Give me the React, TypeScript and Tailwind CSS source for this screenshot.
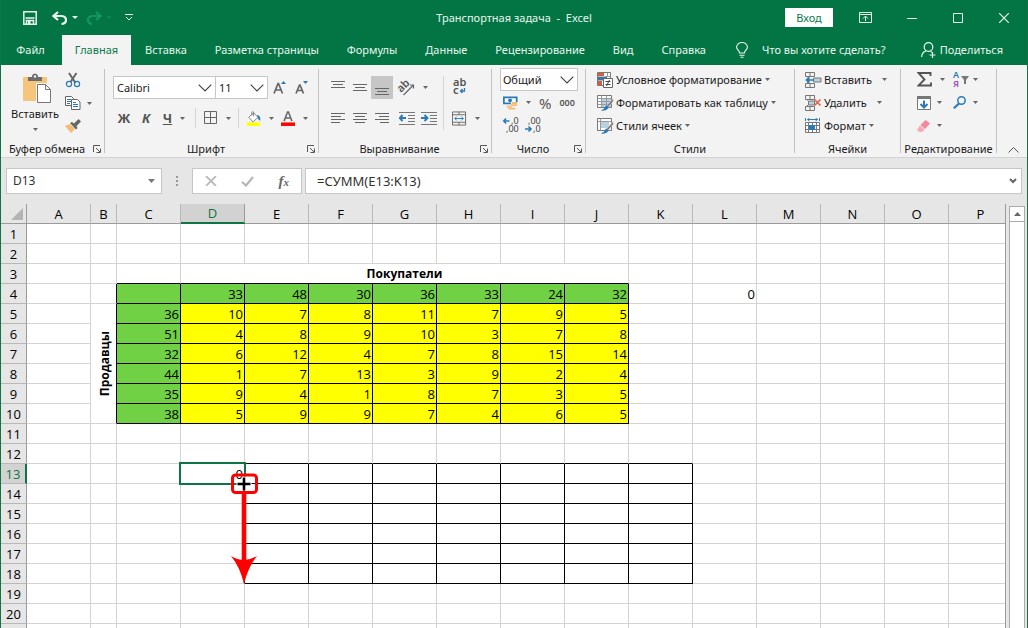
import type { ReactNode } from "react";

const columns = ["A", "B", "C", "D", "E", "F", "G", "H", "I", "J", "K", "L", "M", "N", "O", "P"];

const lastLabelledRow = 20;

const values: Record<number, Record<string, number>> = {
  4: { D: 33, E: 48, F: 30, G: 36, H: 33, I: 24, J: 32, L: 0 },
  5: { C: 36, D: 10, E: 7, F: 8, G: 11, H: 7, I: 9, J: 5 },
  6: { C: 51, D: 4, E: 8, F: 9, G: 10, H: 3, I: 7, J: 8 },
  7: { C: 32, D: 6, E: 12, F: 4, G: 7, H: 8, I: 15, J: 14 },
  8: { C: 44, D: 1, E: 7, F: 13, G: 3, H: 9, I: 2, J: 4 },
  9: { C: 35, D: 9, E: 4, F: 1, G: 8, H: 7, I: 3, J: 5 },
  10: { C: 38, D: 5, E: 9, F: 9, G: 7, H: 4, I: 6, J: 5 },
};

const within = (v: string | number, a: string | number, b: string | number) => v >= a && v <= b;

function cellClass(col: string, row: number) {
  const blackRight =
    (within(row, 4, 10) && within(col, "B", "J")) || (within(row, 13, 18) && within(col, "D", "K"));
  const blackBottom =
    (within(row, 3, 10) && within(col, "C", "J")) || (within(row, 12, 18) && within(col, "E", "K"));
  let fill = "";
  if (within(row, 4, 10) && within(col, "C", "J")) {
    fill = row === 4 || col === "C" ? "bg-[#6fd143]" : "bg-[#ffff00]";
  }
  return [
    "h-5 border-r border-b pr-px pl-0.5 py-0 text-right leading-[18px]",
    blackRight ? "border-r-black" : "border-r-[#d4d4d4]",
    blackBottom ? "border-b-black" : "border-b-[#d4d4d4]",
    fill,
    col === "D" && row === 13 ? "relative" : "",
  ].join(" ");
}

function Caret() {
  return (
    <svg width="5" height="3" viewBox="0 0 5 3" className="shrink-0" fill="#666">
      <path d="M0 0h5L2.5 3z" />
    </svg>
  );
}

function Chevron() {
  return (
    <svg width="14" height="8" viewBox="0 0 14 8" fill="none" stroke="#444" strokeWidth="1.2">
      <path d="M.7.7 7 7 13.3.7" />
    </svg>
  );
}

function Launcher() {
  return (
    <svg width="8" height="8" viewBox="0 0 8 8" fill="none" stroke="#555">
      <path d="M.5 7V.5H7M3 3l4 4M7.5 3.500v4h-4" />
    </svg>
  );
}

function Group({ title, width, launcher, children }: { title: string; width: string; launcher?: boolean; children: ReactNode }) {
  return (
    <section className={`flex shrink-0 ${width}`}>
      <div className="flex min-w-0 flex-1 flex-col">
        <div className="h-[73px]">{children}</div>
        <div className="flex h-4 items-center whitespace-nowrap">
          <h2 className="flex-1 text-center">{title}</h2>
          {launcher && (
            <button aria-label={`${title}: параметры`} className="mr-[3px]">
              <Launcher />
            </button>
          )}
        </div>
      </div>
      <div className="mt-px h-[84px] w-px bg-[#c3c3c3]" />
    </section>
  );
}

function IconButton({ label, width, caret, children }: { label: string; width: string; caret?: boolean; children: ReactNode }) {
  return (
    <button aria-label={label} className={`flex h-[22px] shrink-0 items-center justify-center ${width}`}>
      {children}
      {caret && (
        <span className="ml-2">
          <Caret />
        </span>
      )}
    </button>
  );
}

function Lines({ d }: { d: string }) {
  return (
    <svg width="14" height="14" viewBox="0 0 14 14" stroke="#666" fill="none">
      <path d={d} />
    </svg>
  );
}

function PasteIcon() {
  return (
    <svg width="28" height="32" viewBox="0 0 28 32">
      <path fill="#f4c57a" d="M0 4h24v24H0z" />
      <path fill="#6d6d6d" d="M5 4h4V2.500Q12-1.500 15 2.500V4h4v4H5z" />
      <circle cx="12" cy="3.500" r="1.200" fill="#f3f3f3" />
      <path fill="#fff" stroke="#f3f3f3" strokeWidth="3" d="M14.500 11.500h8l5 5v13h-13z" />
      <path fill="#fff" stroke="#777" d="M14.500 11.500h8l5 5v13h-13zM22.500 11.500v5h5" />
    </svg>
  );
}

function CutIcon() {
  return (
    <svg width="16" height="16" viewBox="0 0 16 16" fill="none">
      <path d="M4 1l6.500 10M11.500 1L5.500 10" stroke="#666" strokeWidth="2" />
      <circle cx="4" cy="12" r="2.600" stroke="#2a7ab5" strokeWidth="1.200" />
      <circle cx="12" cy="12" r="2.600" stroke="#2a7ab5" strokeWidth="1.200" />
    </svg>
  );
}

function CopyIcon() {
  return (
    <svg width="16" height="14" viewBox="0 0 16 14" fill="#fff" stroke="#666">
      <path d="M.5.5h6l2 2v7h-8z" />
      <path d="M2 3.500h4M2 5.500h4M2 7.500h3" stroke="#2a7ab5" />
      <path d="M6.500 3.500h6l2.500 2.500v7.500H6.500z" />
      <path d="M8 6.500h3M8 8.500h5M8 10.500h5" stroke="#2a7ab5" />
    </svg>
  );
}

function BrushIcon() {
  return (
    <svg width="16" height="14" viewBox="0 0 16 14">
      <path fill="#f4bd73" d="M0 7l5-2 5 5-4 4z" />
      <path fill="#666" d="M5 4l2-1 2 1.500L13.500 0 16 2.500 11.500 7l1 2-1.500 1.500z" />
    </svg>
  );
}

function BordersIcon() {
  return (
    <svg width="14" height="14" viewBox="0 0 14 14" fill="none" stroke="#666">
      <path d="M.5.5h12v12H.5zM6.500.5v12M.5 6.500h12" />
    </svg>
  );
}

function FillIcon() {
  return (
    <svg width="16" height="17" viewBox="0 0 16 17" fill="none">
      <path d="M2 7l5.500-5 5 5-5.500 5.500z" fill="#fff" stroke="#777" />
      <path d="M5.500 5V1.500Q6.500-.5 7.500 1.500V6" stroke="#777" />
      <path d="M11.500 4.500Q16 5 15 11l-2-1.500z" fill="#2a7ab5" />
      <path d="M0 13h15v4H0z" fill="#ff0" />
    </svg>
  );
}

function FontColorIcon() {
  return (
    <svg width="16" height="17" viewBox="0 0 16 17" fill="none">
      <path d="M3.500 11.500L7.500 1h1l4 10.500M5 8h6" stroke="#666" strokeWidth="1.700" />
      <path d="M0 13h16v4H0z" fill="#f00" />
    </svg>
  );
}

function GrowFont({ down }: { down?: boolean }) {
  return (
    <svg width="14" height="16" viewBox="0 0 14 16" fill="none">
      <path d={down ? "M1 13.500L4.500 5h.5l3.500 8.500M2.500 10.500h5" : "M1 13.500L5 3.500h.5l4 10M2.500 10h6"} stroke="#666" strokeWidth="1.700" />
      <path d={down ? "M8 1h5l-2.500 3z" : "M8 4h5L10.500 1z"} fill="#2a7ab5" />
    </svg>
  );
}

function OrientationIcon() {
  return (
    <svg width="17" height="16" viewBox="0 0 17 16" className="overflow-visible">
      <g transform="rotate(-45 8 8)">
        <text x="1" y="8" fontSize="11" fontWeight="600" fill="#555">ab</text>
      </g>
      <path d="M5.500 15L15.500 5M12 5h3.500v3.500" stroke="#666" fill="none" strokeWidth="1.200" />
    </svg>
  );
}

function WrapIcon() {
  return (
    <svg width="14" height="18" viewBox="0 0 14 18" className="overflow-visible">
      <text x="0" y="8" fontSize="11" fontWeight="600" fill="#555">ab</text>
      <text x="0" y="16" fontSize="11" fontWeight="600" fill="#555">c</text>
      <path d="M11.500 10v3H7.500M9.500 11l-2 2 2 2" fill="none" stroke="#2a7ab5" strokeWidth="1.300" />
    </svg>
  );
}

function IndentIcon({ right }: { right?: boolean }) {
  return (
    <svg width="16" height="14" viewBox="0 0 16 14" fill="none">
      <path d="M0 1.500h16M9 4.500h7M9 7.500h7M9 10.500h7M0 13.500h16" stroke="#777" />
      <path d={right ? "M0 7h6M3.500 4L6.500 7l-3 3" : "M7 7H1M3.500 4L.8 7l2.700 3"} stroke="#2a7ab5" strokeWidth="1.900" />
    </svg>
  );
}

function MergeIcon() {
  return (
    <svg width="16" height="15" viewBox="0 0 16 15" fill="none">
      <path d="M.5.5h14v14H.5zM.5 3.500h14M.5 11.500h14M7.500.5v3M7.500 11.500v3" stroke="#666" />
      <path d="M3 7.500h9M5 5.500l-2 2 2 2M10 5.500l2 2-2 2" stroke="#2a7ab5" />
    </svg>
  );
}

function CurrencyIcon() {
  return (
    <svg width="17" height="16" viewBox="0 0 17 16" fill="none">
      <path d="M1 1.500h14.500v7H1z" fill="#fff" stroke="#2a7ab5" strokeWidth="2" />
      <circle cx="8" cy="5" r="2.200" fill="#2a7ab5" />
      <path d="M9 7h8v8H4v-4.500h5z" fill="#f3f3f3" />
      <path d="M10 7h6v2h-6zM9 9.500h7v2H9zM4 11h6v2H4zM6 13.500h8v2H6z" fill="#f4bd73" />
    </svg>
  );
}

function DecimalIcon({ less }: { less?: boolean }) {
  return (
    <svg width="16" height="17" viewBox="0 0 16 17" fontSize="9" fill="#444" className="overflow-visible">
      <text x={less ? 3 : 8} y="7">{less ? ",00" : ",0"}</text>
      <text x={less ? 8 : 3} y="15">{less ? ",0" : ",00"}</text>
      <path
        d={less ? "M0 12h6M3.500 9.500L6 12l-2.500 2.500" : "M6.500 4H1M3 1.500L.8 4 3 6.500"}
        fill="none"
        stroke="#2a7ab5"
        strokeWidth="1.600"
      />
    </svg>
  );
}

function ConditionalIcon() {
  return (
    <svg width="16" height="16" viewBox="0 0 16 16" fill="none">
      <path d="M.5.5h13v13H.5z" fill="#fff" stroke="#777" />
      <path d="M1 1h6v3.500H1zM1 9h4v4H1z" fill="#dc5b3c" />
      <path d="M1 5h9v3.500H1z" fill="#2a7ab5" />
      <path d="M10.500 1v3M7.500 4.500h6" stroke="#999" />
      <path d="M6.500 6.500h9v9h-9z" fill="#fff" stroke="#666" />
      <path d="M8.500 9.500h5M8.500 12.500h5M12.500 8l-3 6" stroke="#444" />
    </svg>
  );
}

function StyleIcon({ single }: { single?: boolean }) {
  return (
    <svg width="17" height="16" viewBox="0 0 17 16" fill="none">
      <path d="M.5.5h14v12H.5z" fill="#fff" stroke="#777" />
      <path d={single ? "M4 4h8v6H4z" : "M5 4h9v8H5z"} fill="#b7d3e3" />
      <path d={single ? "M.5 3.500h14M3.500.5v12" : "M.5 3.500h14M.5 6.500h14M.5 9.500h14M4.500.5v12M9.500.5v12"} stroke="#999" />
      <path d="M16 3.500L9.500 11l1.500 1.500L16.500 6z" fill="#777" stroke="#f3f3f3" strokeWidth=".5" />
      <path d="M9 10.500q2 0 2.500 2.500Q9 16.500 4 15.500 7.500 14 9 10.500z" fill="#2a7ab5" />
    </svg>
  );
}

function CellsIcon({ kind }: { kind: "insert" | "delete" | "format" }) {
  if (kind === "format") {
    return (
      <svg width="16" height="16" viewBox="0 0 16 16" fill="none">
        <path d="M2.500 1.500h10M4.500 0L2.500 1.500 4.500 3M10.500 0l2 1.500-2 1.500M.5 0v3M14.500 0v3" stroke="#2a7ab5" />
        <path d="M.5 4.500h14v10H.5zM.5 7.500h14M.5 11.500h14M3.500 4.500v10M11.500 4.500v10M7.500 4.500v10" fill="#fff" stroke="#777" />
        <path d="M4 7h6v5H4z" fill="#2a7ab5" />
      </svg>
    );
  }
  return (
    <svg width="17" height="16" viewBox="0 0 17 16" fill="none">
      <path d="M.5.5h9v4h-9zM5 .5v4M.5 11.500h9v4h-9zM5 11.500v4M2.500 4.500v1M2.500 10v1.500" stroke="#777" />
      {kind === "insert" ? (
        <>
          <path d="M8.500 6h7.500v4H8.500z" fill="#b7d3e3" stroke="#777" />
          <path d="M8.500 8H2M4.500 5.500L1.500 8l3 2.500" stroke="#2a7ab5" strokeWidth="1.700" />
        </>
      ) : (
        <>
          <path d="M3.500 6h6v4h-6z" fill="#b7d3e3" stroke="#777" />
          <path d="M9.500 4.500l6 6M15.500 4.500l-6 6" stroke="#e8604c" strokeWidth="1.700" />
        </>
      )}
    </svg>
  );
}

function TextTool({ icon, label, gap }: { icon: ReactNode; label: string; gap: string }) {
  return (
    <button className="flex h-[23px] items-center whitespace-nowrap">
      <span className="mr-0.5 w-[17px]">{icon}</span>
      <span className={gap}>{label}</span>
      <Caret />
    </button>
  );
}

function TitleBar() {
  return (
    <header className="grid h-[35px] grid-cols-3 items-center">
      <div className="flex items-center pl-[22px]">
        <button aria-label="Сохранить">
          <svg width="14" height="14" viewBox="0 0 14 14" fill="none" stroke="#e6f7ee" strokeWidth="1.500">
            <path d="M.8.800h12.400v12.400H.8zM2.500 7h9" />
            <path d="M3.500 13V9.500h7V13" />
            <path d="M5 10h2.500v3H5z" fill="#e6f7ee" stroke="none" />
          </svg>
        </button>
        <button aria-label="Отменить" className="ml-[15px] flex items-center gap-[5px]">
          <svg width="15" height="14" viewBox="0 0 15 14" fill="none" stroke="#e6f7ee" strokeWidth="2.200">
            <path d="M6 1L1.500 5 6 9M2 5h7q5 0 5 4 0 3.500-4.500 4" />
          </svg>
          <svg width="6" height="3" viewBox="0 0 6 3" fill="#e6f7ee"><path d="M0 0h6L3 3z" /></svg>
        </button>
        <button aria-label="Вернуть" className="ml-[9px] flex items-center gap-[5px]" disabled>
          <svg width="15" height="14" viewBox="0 0 15 14" fill="none" stroke="#159464" strokeWidth="2.200">
            <path d="M9 1l4.500 4L9 9M13 5H6Q1 5 1 9q0 3.500 4 4" />
          </svg>
          <svg width="4" height="3" viewBox="0 0 6 3" fill="#159464"><path d="M0 0h6L3 3z" /></svg>
        </button>
        <button aria-label="Настройка панели" className="ml-3.5">
          <svg width="8" height="7" viewBox="0 0 8 7" fill="none" stroke="#e6f7ee">
            <path d="M0 .5h8M1 3l3 3 3-3" />
          </svg>
        </button>
      </div>
      <h1 className="text-center whitespace-pre">Транспортная задача  -  Excel</h1>
      <div className="flex items-center justify-end pr-[18px]">
        <button className="mr-[26px] h-[19px] w-12 bg-white text-[#0b7a4b]">Вход</button>
        <button aria-label="Параметры ленты" className="mr-[34px]">
          <svg width="14" height="11" viewBox="0 0 14 11" fill="none" stroke="#e6f7ee">
            <path d="M.5.5h12v10H.5zM.5 2.500h12M6.500 9V4.500M4 6.500l2.500-2.500L9 6.500" />
          </svg>
        </button>
        <button aria-label="Свернуть" className="mr-9">
          <svg width="10" height="10" viewBox="0 0 10 10" stroke="#e6f7ee"><path d="M0 5.500h10" /></svg>
        </button>
        <button aria-label="Развернуть" className="mr-9">
          <svg width="10" height="10" viewBox="0 0 10 10" fill="none" stroke="#e6f7ee"><path d="M.5.5h9v9h-9z" /></svg>
        </button>
        <button aria-label="Закрыть">
          <svg width="10" height="10" viewBox="0 0 10 10" fill="none" stroke="#e6f7ee" strokeWidth="1.200"><path d="M0 0l10 10M10 0L0 10" /></svg>
        </button>
      </div>
    </header>
  );
}

const tabs = ["Вставка", "Разметка страницы", "Формулы", "Данные", "Рецензирование", "Вид", "Справка"];

function TabBar() {
  return (
    <nav className="flex h-[30px] items-stretch whitespace-nowrap">
      <button className="w-[61px] shrink-0 pr-0.5">Файл</button>
      <button className="w-[69px] shrink-0 bg-[#f3f3f3] text-[#0b7a4b]">Главная</button>
      {tabs.map((tab) => (
        <button key={tab} className="shrink-0 px-3.5">{tab}</button>
      ))}
      <button className="ml-4 flex shrink-0 items-center gap-3.5">
        <svg width="12" height="16" viewBox="0 0 12 16" fill="none" stroke="#e6f7ee" strokeWidth="1.100">
          <path d="M3.500 11Q3.500 9.500 2 8 .6 6.500.6 5a5.400 4.500 0 0 1 10.800 0Q11.400 6.500 10 8 8.500 9.500 8.500 11zM3.500 13.200h5M4.500 15.300h3" />
        </svg>
        Что вы хотите сделать?
      </button>
      <button className="mr-6 ml-auto flex items-center gap-1">
        <svg width="15" height="16" viewBox="0 0 15 16" fill="none" stroke="#e6f7ee" strokeWidth="1.200">
          <ellipse cx="7.500" cy="5" rx="4.300" ry="4.400" />
          <path d="M.6 15Q1 10 5 9.200M9.500 9.500l1.500.8M11.500 10v6M8.500 13h6" />
        </svg>
        Поделиться
      </button>
    </nav>
  );
}

function Ribbon() {
  return (
    <div className="flex h-[93px] border-b border-[#d2d2d2] bg-[#f3f3f3] pt-[3px] text-[#1a1a1a]">
      <Group title="Буфер обмена" width="w-[104px]" launcher>
        <div className="flex pt-[5px] pl-2">
          <button className="flex w-[52px] flex-col items-center">
            <span className="pl-[3px]"><PasteIcon /></span>
            <span className="leading-[18px]">Вставить</span>
            <span className="mt-[5px]"><Caret /></span>
          </button>
          <div className="-mt-1 ml-1 flex flex-col">
            <button aria-label="Вырезать" className="flex h-[22px] w-4 items-center"><CutIcon /></button>
            <button aria-label="Копировать" className="flex h-6 items-center gap-[6px]"><CopyIcon /><Caret /></button>
            <button aria-label="Формат по образцу" className="flex h-[22px] w-4 items-center"><BrushIcon /></button>
          </div>
        </div>
      </Group>

      <Group title="Шрифт" width="w-[214px]" launcher>
        <div className="flex items-center pt-2 pl-2">
          <label className="relative flex h-[23px] w-[103px] items-center border border-[#c6c6c6] bg-white">
            <select aria-label="Шрифт" className="w-full appearance-none pl-[3px]" defaultValue="Calibri">
              <option>Calibri</option>
            </select>
            <span className="pointer-events-none absolute right-[3px]"><Chevron /></span>
          </label>
          <label className="relative -ml-px flex h-[23px] w-[53px] items-center border border-[#c6c6c6] bg-white">
            <select aria-label="Размер шрифта" className="w-full appearance-none pl-[3px]" defaultValue="11">
              <option>11</option>
            </select>
            <span className="pointer-events-none absolute right-[3px]"><Chevron /></span>
          </label>
          <div className="flex pl-px">
            <IconButton label="Увеличить размер" width="w-[22px]"><GrowFont /></IconButton>
            <IconButton label="Уменьшить размер" width="w-[22px]"><GrowFont down /></IconButton>
          </div>
        </div>
        <div className="flex items-center pt-2 pl-2 text-[13px] font-bold text-[#555]">
          <IconButton label="Полужирный" width="w-[22px]">Ж</IconButton>
          <IconButton label="Курсив" width="w-[22px]"><i>К</i></IconButton>
          <IconButton label="Подчёркнутый" width="w-[34px]" caret><u>Ч</u></IconButton>
          <div className="mr-2 ml-1 h-5 w-px bg-[#d4d4d4]" />
          <IconButton label="Границы" width="w-[27px]" caret><BordersIcon /></IconButton>
          <div className="mr-2 ml-[7px] h-5 w-px bg-[#d4d4d4]" />
          <IconButton label="Цвет заливки" width="w-[27px]" caret><FillIcon /></IconButton>
          <span className="w-[7px]" />
          <IconButton label="Цвет текста" width="w-[27px]" caret><FontColorIcon /></IconButton>
        </div>
      </Group>

      <Group title="Выравнивание" width="w-[173px]" launcher>
        <div className="flex pt-2">
          <div className="pl-2">
            <div className="flex h-[23px] items-center">
              <IconButton label="По верхнему краю" width="w-[22px]"><Lines d="M0 0.500h14M2 3.500h10M0 6.500h14" /></IconButton>
              <IconButton label="По середине" width="w-[22px]"><Lines d="M0 3.500h14M2 6.500h10M0 9.500h14" /></IconButton>
              <button aria-label="По нижнему краю" className="flex h-[23px] w-[22px] items-center justify-center bg-[#c6c6c6]">
                <Lines d="M0 7.500h14M2 10.500h10M0 13.500h14" />
              </button>
              <span className="w-1" />
              <IconButton label="Ориентация" width="w-[32px]" caret><OrientationIcon /></IconButton>
            </div>
            <div className="flex items-center pt-2">
              <IconButton label="По левому краю" width="w-[22px]"><Lines d="M0 2.500h14M0 5.500h10M0 8.500h14M0 11.500h9" /></IconButton>
              <IconButton label="По центру" width="w-[22px]"><Lines d="M0 2.500h14M2 5.500h10M0 8.500h14M2 11.500h10" /></IconButton>
              <IconButton label="По правому краю" width="w-[22px]"><Lines d="M0 2.500h14M4 5.500h10M0 8.500h14M5 11.500h9" /></IconButton>
              <span className="w-[3px]" />
              <IconButton label="Уменьшить отступ" width="w-[22px]"><IndentIcon /></IconButton>
              <IconButton label="Увеличить отступ" width="w-[22px]"><IndentIcon right /></IconButton>
            </div>
          </div>
          <div className="mr-2 ml-[3px] h-[54px] w-px bg-[#d4d4d4]" />
          <div>
            <IconButton label="Перенести текст" width="w-4"><WrapIcon /></IconButton>
            <div className="h-[9px]" />
            <IconButton label="Объединить" width="w-[28px]" caret><MergeIcon /></IconButton>
          </div>
        </div>
      </Group>

      <Group title="Число" width="w-[94px]" launcher>
        <div className="pl-2">
          <label className="relative flex h-[23px] w-[78px] items-center border border-[#c6c6c6] bg-white">
            <select aria-label="Числовой формат" className="w-full appearance-none pl-[2px]" defaultValue="Общий">
              <option>Общий</option>
            </select>
            <span className="pointer-events-none absolute right-[3px]"><Chevron /></span>
          </label>
          <div className="flex h-[23px] items-center pl-[3px]">
            <IconButton label="Денежный формат" width="w-[28px]" caret><CurrencyIcon /></IconButton>
            <button className="ml-2 text-[15px] text-[#555]">%</button>
            <button className="ml-2 text-[9px] font-semibold text-[#555]">000</button>
          </div>
          <div className="flex h-[23px] items-center gap-1.5 pl-[3px]">
            <button aria-label="Увеличить разрядность"><DecimalIcon /></button>
            <button aria-label="Уменьшить разрядность"><DecimalIcon less /></button>
          </div>
        </div>
      </Group>

      <Group title="Стили" width="w-[209px]">
        <div className="pl-[11px]">
          <TextTool gap="mr-[3px]" label="Условное форматирование" icon={<ConditionalIcon />} />
          <TextTool gap="mr-[3px]" label="Форматировать как таблицу" icon={<StyleIcon />} />
          <TextTool gap="mr-[3px]" label="Стили ячеек" icon={<StyleIcon single />} />
        </div>
      </Group>

      <Group title="Ячейки" width="w-[106px]">
        <div className="pl-2.5">
          <TextTool gap="mr-2.5" label="Вставить" icon={<CellsIcon kind="insert" />} />
          <TextTool gap="mr-2.5" label="Удалить" icon={<CellsIcon kind="delete" />} />
          <TextTool gap="mr-[3px]" label="Формат" icon={<CellsIcon kind="format" />} />
        </div>
      </Group>

      <Group title="Редактирование" width="w-[96px]">
        <div className="grid grid-cols-[36px_36px] grid-rows-[23px_23px_23px] items-center pl-4">
          <button aria-label="Сумма" className="flex items-center gap-2">
            <svg width="15" height="15" viewBox="0 0 15 15" fill="none" stroke="#555" strokeWidth="1.900">
              <path d="M13.500 4V1H1.500l6 6.500-6 6h12.500V10.500" />
            </svg>
            <Caret />
          </button>
          <button aria-label="Сортировка и фильтр" className="flex items-center gap-1">
            <svg width="16" height="17" viewBox="0 0 16 17" fontSize="9" fontWeight="600" className="overflow-visible">
              <text x="0" y="7" fill="#2a7ab5">А</text>
              <text x="0" y="16" fill="#9a50b4">Я</text>
              <path d="M8 5h8l-3 4v4h-2V9z" fill="#777" />
            </svg>
            <Caret />
          </button>
          <button aria-label="Заполнить" className="flex items-center gap-[6px]">
            <svg width="14" height="16" viewBox="0 0 14 16" fill="none">
              <path d="M.5 1.500h13v13H.5z" fill="#fff" stroke="#777" />
              <path d="M0 1h14v3H0z" fill="#777" />
              <path d="M7 5.500v7M3.500 9L7 12.500 10.500 9" stroke="#2a7ab5" strokeWidth="2" />
            </svg>
            <Caret />
          </button>
          <button aria-label="Найти и выделить" className="flex items-center gap-[7px]">
            <svg width="13" height="13" viewBox="0 0 13 13" fill="none" stroke="#2a7ab5">
              <circle cx="8.500" cy="4.500" r="3.700" strokeWidth="1.500" />
              <path d="M6 7.500L.8 12.200" strokeWidth="2.200" />
            </svg>
            <Caret />
          </button>
          <button aria-label="Очистить" className="flex items-center gap-[7px]">
            <svg width="13" height="12" viewBox="0 0 13 12">
              <path d="M8.500 0L13 3.500 8 9 3.500 5z" fill="#f5879f" />
              <path d="M3 5.500L7.500 9.500 5 12H2L0 9.500z" fill="#f9a9ba" />
            </svg>
            <Caret />
          </button>
        </div>
      </Group>
      <div className="flex flex-1 items-end justify-end pr-2 pb-1">
        <button aria-label="Свернуть ленту">
          <svg width="11" height="6" viewBox="0 0 11 6" fill="none" stroke="#555"><path d="M.5 5.500l5-5 5 5" /></svg>
        </button>
      </div>
    </div>
  );
}

function FormulaBar() {
  return (
    <div className="flex h-[46px] items-center px-[5px] text-[#333]">
      <label className="relative flex h-[26px] w-[156px] items-center border border-[#c6c6c6] bg-white">
        <input aria-label="Имя ячейки" className="w-full pl-1.5 text-[12px] outline-none" defaultValue="D13" />
        <svg width="7" height="4" viewBox="0 0 7 4" fill="#777" className="absolute right-1.5"><path d="M0 0h7L3.500 4z" /></svg>
      </label>
      <svg width="2" height="10" viewBox="0 0 2 10" fill="#999" className="mx-3.5"><path d="M0 0h2v2H0zM0 4h2v2H0zM0 8h2v2H0z" /></svg>
      <div className="flex h-[26px] w-[110px] items-center justify-between border border-[#c6c6c6] bg-white px-3">
        <button aria-label="Отмена">
          <svg width="12" height="10" viewBox="0 0 12 10" stroke="#bbb" strokeWidth="1.800"><path d="M1 0l10 10M11 0L1 10" /></svg>
        </button>
        <button aria-label="Ввод">
          <svg width="13" height="11" viewBox="0 0 13 11" fill="none" stroke="#b5b5b5" strokeWidth="2.200"><path d="M1 6l4 3.500L12 1" /></svg>
        </button>
        <button aria-label="Вставить функцию" className="font-['Liberation_Serif',serif] text-[15px] leading-4 font-bold text-[#666] italic">
          f<span className="text-[11px]">x</span>
        </button>
      </div>
      <label className="relative ml-[3px] flex h-[26px] flex-1 items-center border border-[#c6c6c6] bg-white">
        <input aria-label="Строка формул" className="w-full pl-[11px] text-[13px] outline-none" defaultValue="=СУММ(E13:K13)" />
        <svg width="8" height="6" viewBox="0 0 8 6" fill="none" stroke="#666" strokeWidth="2" className="absolute right-1"><path d="M1 1l3 3 3-3" /></svg>
      </label>
    </div>
  );
}

function DragHint() {
  return (
    <svg width="32" height="114" viewBox="0 0 32 114" fill="none" className="absolute top-2 left-12 z-20">
      <path d="M15 20v76" stroke="#f00" strokeWidth="4.600" />
      <path d="M2 84q13 8 26 0Q19 95 15 112 11 95 2 84z" fill="#f00" />
      <path d="M15 4.500v14M7.500 12h15" stroke="#fff" strokeWidth="4.500" />
      <path d="M15 5.500v13M8.500 12h13" stroke="#000" strokeWidth="2.600" />
      <rect x="3.500" y="3" width="24" height="17.500" rx="3" stroke="#f00" strokeWidth="3" />
    </svg>
  );
}

function Sheet() {
  const rows = Array.from({ length: lastLabelledRow + 1 }, (_, i) => i + 1);
  return (
    <div className="flex min-h-0 flex-1 font-['Open_Sans',sans-serif]">
      <div className="min-w-0 flex-1 overflow-hidden border-r border-[#9b9b9b] bg-white">
        <table className="w-[948px] table-fixed border-separate border-spacing-0 text-[13px] text-black">
          <colgroup>
            <col className="w-[26px]" />
            {columns.map((c) => (
              <col key={c} className={c === "B" ? "w-[26px]" : "w-[64px]"} />
            ))}
          </colgroup>
          <thead>
            <tr className="bg-[#e6e6e6] leading-[18px]">
              <th className="h-5 border-r border-b border-[#9b9b9b] p-0 align-bottom">
                <svg width="12" height="12" viewBox="0 0 12 12" fill="#b4b4b4" className="mr-[3px] mb-[3px] ml-auto"><path d="M12 0v12H0z" /></svg>
              </th>
              {columns.map((c) => (
                <th
                  key={c}
                  className={
                    c === "D"
                      ? "h-5 border-r border-b-2 border-r-[#9b9b9b] border-b-[#0f7444] bg-[#d2d2d2] p-0 font-normal text-[#0f7444]"
                      : "h-5 border-r border-b border-r-[#b8b8b8] border-b-[#9b9b9b] p-0 font-normal"
                  }
                >
                  {c}
                </th>
              ))}
            </tr>
          </thead>
          <tbody>
            {rows.map((r) => (
              <tr key={r}>
                <th
                  className={
                    r === 13
                      ? "h-5 border-r-2 border-b border-r-[#0f7444] border-b-[#b8b8b8] bg-[#d2d2d2] p-0 leading-[18px] font-normal text-[#0f7444]"
                      : "h-5 border-r border-b border-r-[#9b9b9b] border-b-[#b8b8b8] bg-[#e6e6e6] p-0 leading-[18px] font-normal"
                  }
                >
                  {r <= lastLabelledRow && r}
                </th>
                {columns.map((c) => {
                  if (r === 3 && c === "D") {
                    return (
                      <td key={c} colSpan={7} className="h-5 border-r border-b border-r-[#d4d4d4] border-b-black p-0 text-center text-[12px] leading-[18px] font-bold">
                        Покупатели
                      </td>
                    );
                  }
                  if (r === 3 && within(c, "E", "J")) return null;
                  if (c === "B" && r === 5) {
                    return (
                      <td key={c} rowSpan={6} className="border-r border-b border-r-black border-b-[#d4d4d4] p-0 text-[12px] font-bold">
                        <span className="mr-0.5 ml-auto block w-[18px] rotate-180 text-center leading-[18px] [writing-mode:vertical-rl]">Продавцы</span>
                      </td>
                    );
                  }
                  if (c === "B" && within(r, 6, 10)) return null;
                  const active = c === "D" && r === 13;
                  return (
                    <td key={c} className={cellClass(c, r)}>
                      {active ? 0 : values[r]?.[c]}
                      {active && (
                        <>
                          <div className="absolute -inset-0.5 z-10 border-2 border-[#0f7444]" />
                          <DragHint />
                        </>
                      )}
                    </td>
                  );
                })}
              </tr>
            ))}
          </tbody>
        </table>
      </div>
      <div className="flex w-[21px] flex-col pt-0.5 pr-0.5 pl-[3px]">
        <button aria-label="Прокрутить вверх" className="flex h-4 shrink-0 items-center justify-center border border-[#ababab] bg-white">
          <svg width="7" height="4" viewBox="0 0 7 4" fill="#666"><path d="M3.500 0L7 4H0z" /></svg>
        </button>
        <div className="-mt-px flex-1 border-x border-t border-[#ababab] bg-white" />
      </div>
    </div>
  );
}

export default function App() {
  return (
    <div className="flex h-screen flex-col overflow-hidden border-x border-[#0f7444] bg-[#e6e6e6] font-['Noto_Sans',sans-serif] text-[11px] leading-4">
      <div className="bg-[#037544] text-[#e6f7ee]">
        <TitleBar />
        <TabBar />
      </div>
      <Ribbon />
      <FormulaBar />
      <Sheet />
    </div>
  );
}
